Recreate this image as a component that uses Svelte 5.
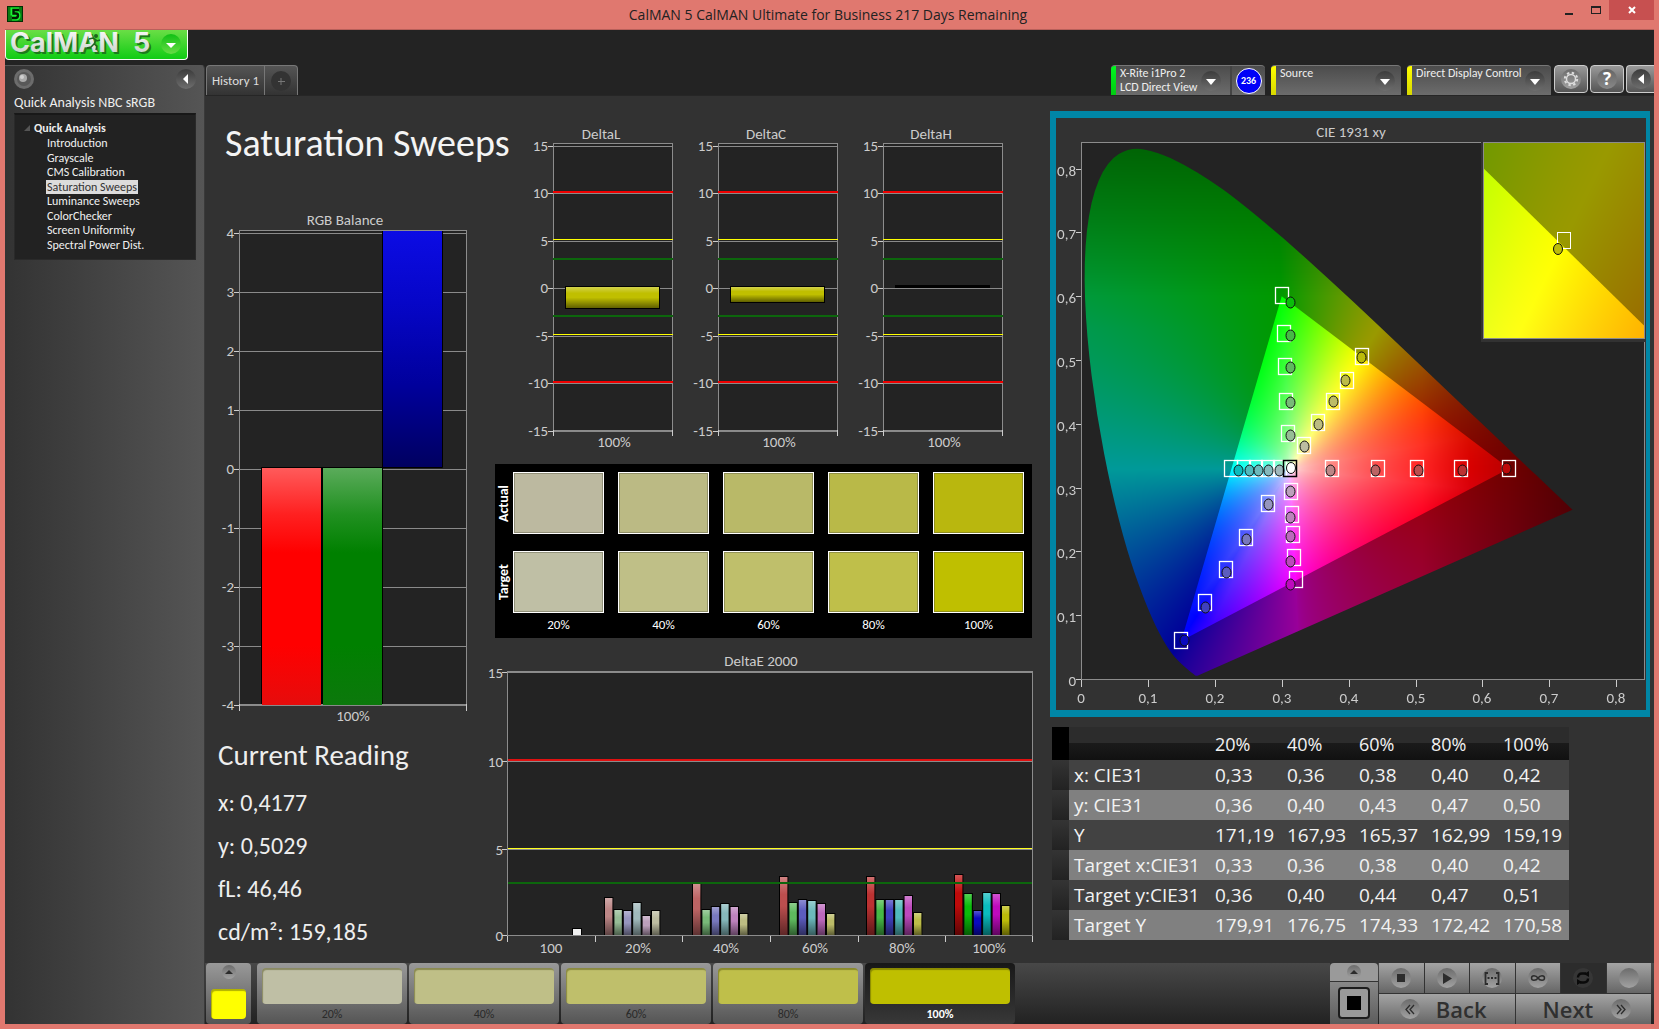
<script>
  import { onMount } from 'svelte';

  const workflow = [
    'Introduction',
    'Grayscale',
    'CMS Calibration',
    'Saturation Sweeps',
    'Luminance Sweeps',
    'ColorChecker',
    'Screen Uniformity',
    'Spectral Power Dist.'
  ];
  const selectedPage = 'Saturation Sweeps';

  const readings = ['x: 0,4177', 'y: 0,5029', 'fL: 46,46', 'cd/m²: 159,185'];

  const levels = ['20%', '40%', '60%', '80%', '100%'];
  const actual = ['#bcb9a0', '#bbba84', '#b9b968', '#b9b948', '#b9b70e'];
  const target = ['#bfbfa5', '#bfbf87', '#bfbf6b', '#bfbf4a', '#bfbf00'];

  const rows = [
    ['x: CIE31', '0,33', '0,36', '0,38', '0,40', '0,42'],
    ['y: CIE31', '0,36', '0,40', '0,43', '0,47', '0,50'],
    ['Y', '171,19', '167,93', '165,37', '162,99', '159,19'],
    ['Target x:CIE31', '0,33', '0,36', '0,38', '0,40', '0,42'],
    ['Target y:CIE31', '0,36', '0,40', '0,44', '0,47', '0,51'],
    ['Target Y', '179,91', '176,75', '174,33', '172,42', '170,58']
  ];

  const deltas = [
    { name: 'DeltaL', top: 166, height: 22, fill: '#c0bf00' },
    { name: 'DeltaC', top: 166, height: 16, fill: '#c0bf00' },
    { name: 'DeltaH', top: 165, height: 2, fill: '#000' }
  ];
  const deltaLimits = [
    [10, '#f00000'],
    [5, '#ffff00'],
    [3, '#0c660c'],
    [-3, '#0c660c'],
    [-5, '#ffff00'],
    [-10, '#f00000']
  ];

  const errorTicks = [23, 111, 198, 286, 374, 461, 548];
  const errorLabels = [
    [67, '100'],
    [154, '20%'],
    [242, '40%'],
    [331, '60%'],
    [418, '80%'],
    [505, '100%']
  ];
  const errorGroups = [
    { x: 120, tops: [249, 261, 262, 254, 267, 262], fills: ['#bc8686', '#96bc96', '#9696be', '#a0b9bc', '#bca0bc', '#bcbca0'] },
    { x: 208, tops: [234, 261, 258, 255, 258, 265], fills: ['#bc6464', '#78b978', '#7878be', '#86b9bc', '#bc82bc', '#bcbc82'] },
    { x: 295, tops: [228, 254, 251, 252, 255, 265], fills: ['#bc4e4e', '#5eb95e', '#5c5cbe', '#6cb9bc', '#bc68bc', '#bcbc68'] },
    { x: 382, tops: [228, 251, 251, 251, 247, 264], fills: ['#bc3232', '#46b946', '#4040be', '#50b9bc', '#bc48bc', '#bcbc48'] },
    { x: 470, tops: [226, 245, 262, 244, 245, 257], fills: ['#be0a0a', '#0abc0a', '#0a0abe', '#0abcbe', '#be0abe', '#bcbc0a'] }
  ];

  // CIE plot geometry
  const plotW = 563;
  const plotH = 537;
  const sx = 669;
  const sy = 638;
  const px = (x) => 25 + x * sx;
  const py = (y) => 561 - y * sy;

  const targets = [
    [0.3, 0.602], [0.303, 0.543], [0.305, 0.491], [0.307, 0.436], [0.31, 0.385],
    [0.4195, 0.507], [0.397, 0.469], [0.377, 0.436], [0.355, 0.403], [0.333, 0.366],
    [0.375, 0.33], [0.444, 0.33], [0.502, 0.33], [0.568, 0.33], [0.6395, 0.33],
    [0.314, 0.294], [0.315, 0.258], [0.317, 0.227], [0.319, 0.192], [0.321, 0.156],
    [0.28, 0.276], [0.247, 0.222], [0.2165, 0.172], [0.185, 0.12], [0.149, 0.0605],
    [0.224, 0.33], [0.243, 0.33], [0.262, 0.33], [0.279, 0.33], [0.297, 0.33]
  ];
  const measured = [
    [0.312, 0.591, '#0abe0a'], [0.312, 0.539, '#46b946'], [0.312, 0.489, '#5eb95e'], [0.312, 0.434, '#78b978'], [0.312, 0.383, '#96bc96'],
    [0.418, 0.505, '#bcbc0a'], [0.395, 0.469, '#bcbc48'], [0.376, 0.436, '#bcbc68'], [0.354, 0.4, '#bcbc82'], [0.333, 0.365, '#bcbca0'],
    [0.372, 0.328, '#bc8686'], [0.4395, 0.328, '#bc6464'], [0.503, 0.328, '#bc4e4e'], [0.569, 0.328, '#bc3232'], [0.635, 0.33, '#be0a0a'],
    [0.312, 0.294, '#bca0bc'], [0.312, 0.254, '#bc82bc'], [0.312, 0.224, '#bc68bc'], [0.312, 0.185, '#bc48bc'], [0.312, 0.149, '#be0abe'],
    [0.28, 0.274, '#9696be'], [0.247, 0.22, '#7878be'], [0.2165, 0.1675, '#5c5cbe'], [0.185, 0.113, '#4040be'], [0.1545, 0.061, '#0a0abe'],
    [0.235, 0.328, '#0abcbe'], [0.251, 0.328, '#50b9bc'], [0.265, 0.328, '#6cb9bc'], [0.28, 0.328, '#86b9bc'], [0.2955, 0.328, '#a0b9bc']
  ];

  const locus = [
    [0.1741, 0.005], [0.1714, 0.0051], [0.1689, 0.0069], [0.1644, 0.0109], [0.1566, 0.0177], [0.144, 0.0297],
    [0.1355, 0.0399], [0.1241, 0.0578], [0.1096, 0.0868], [0.0913, 0.1327], [0.0687, 0.2007], [0.0454, 0.295],
    [0.0235, 0.4127], [0.0082, 0.5384], [0.0039, 0.6548], [0.0139, 0.7502], [0.0389, 0.812], [0.0743, 0.8338],
    [0.1142, 0.8262], [0.1547, 0.8059], [0.1929, 0.7816], [0.2296, 0.7543], [0.3016, 0.6923], [0.3731, 0.6245],
    [0.4441, 0.5547], [0.5125, 0.4866], [0.5752, 0.4242], [0.627, 0.3725], [0.6658, 0.334], [0.6915, 0.3083],
    [0.719, 0.2809], [0.7347, 0.2653]
  ];
  const white = [0.3127, 0.329];
  const gamut = [[0.3, 0.6], [0.64, 0.33], [0.15, 0.06]];

  // Hue spokes around the white point: angle, colour, easing towards the next spoke
  const spokes = [
    [0, [1, 0, 0], 1.6],
    [59, [1, 1, 0], 1.2],
    [92.7, [0, 1, 0], 1.3],
    [180, [0, 1, 1], 1],
    [238.8, [0, 0, 1], 0.8],
    [272.7, [1, 0, 1], 0.6],
    [360, [1, 0, 0], 1]
  ];

  let mainCanvas;
  let insetCanvas;

  // Distance from white to the gamut edge along a direction
  function edgeDistance(dx, dy) {
    let best = 1;
    for (let i = 0; i < 3; i++) {
      const [ax, ay] = gamut[i];
      const [bx, by] = gamut[(i + 1) % 3];
      const ex = bx - ax;
      const ey = by - ay;
      const det = dx * ey - dy * ex;
      if (Math.abs(det) < 1e-9) continue;
      const t = ((ax - white[0]) * ey - (ay - white[1]) * ex) / det;
      if (t > 0 && t < best) best = t;
    }
    return Math.min(best, 0.27);
  }

  function chroma(x, y, level) {
    const dx = x - white[0];
    const dy = y - white[1];
    const d = Math.hypot(dx, dy) || 1e-6;
    const angle = ((Math.atan2(dy, dx) * 180) / Math.PI + 360) % 360;
    let i = 0;
    while (i < spokes.length - 2 && angle >= spokes[i + 1][0]) i++;
    const [a0, c0, ease] = spokes[i];
    const [a1, c1] = spokes[i + 1];
    const t = Math.pow((angle - a0) / (a1 - a0), ease);
    const s = Math.min(1, Math.sqrt(d / edgeDistance(dx / d, dy / d)));
    const fade = (1 - 2.1 * Math.max(0, x - 0.51)) * (1 - 1.5 * Math.max(0, y - 0.6));
    const blueFade = 1 - 2.5 * Math.max(0, y - 0.55);
    return c0.map((c, k) => {
      const hue = (c + (c1[k] - c) * t) * (k === 2 ? blueFade : 1);
      return 255 * level * fade * (1 - s * (1 - hue));
    });
  }

  function layer(w, h, toXY, level) {
    const c = document.createElement('canvas');
    c.width = w;
    c.height = h;
    const ctx = c.getContext('2d');
    const img = ctx.createImageData(w, h);
    for (let j = 0; j < h; j++) {
      for (let i = 0; i < w; i++) {
        const [x, y] = toXY(i + 0.5, j + 0.5);
        const [r, g, b] = chroma(x, y, level);
        const k = (j * w + i) * 4;
        img.data[k] = r;
        img.data[k + 1] = g;
        img.data[k + 2] = b;
        img.data[k + 3] = 255;
      }
    }
    ctx.putImageData(img, 0, 0);
    return c;
  }

  function mask(canvas, points, smooth) {
    const ctx = canvas.getContext('2d');
    ctx.globalCompositeOperation = 'destination-in';
    ctx.beginPath();
    ctx.moveTo(...points[0]);
    for (let i = 1; i < points.length; i++) {
      const [x, y] = points[i];
      if (smooth && i < points.length - 1) {
        const [nx, ny] = points[i + 1];
        ctx.quadraticCurveTo(x, y, (x + nx) / 2, (y + ny) / 2);
      } else {
        ctx.lineTo(x, y);
      }
    }
    ctx.closePath();
    ctx.fill();
    return canvas;
  }

  function paint(canvas, x0, y1, kx, ky, outline) {
    const { width: w, height: h } = canvas;
    const toXY = (i, j) => [x0 + i / kx, y1 - j / ky];
    const toPx = ([x, y]) => [(x - x0) * kx, (y1 - y) * ky];
    const ctx = canvas.getContext('2d');
    const dark = layer(w, h, toXY, 0.6);
    ctx.drawImage(outline ? mask(dark, outline.map(toPx), true) : dark, 0, 0);
    ctx.drawImage(mask(layer(w, h, toXY, 1), gamut.map(toPx), false), 0, 0);
  }

  onMount(() => {
    paint(mainCanvas, 0, plotH / sy, sx, sy, locus);
    paint(insetCanvas, 0.3888, 0.5375, 2600, 3210, null);
  });
</script>

{#snippet downArrow()}
  <svg class="round" viewBox="0 0 20 20" aria-hidden="true">
    <circle cx="10" cy="10" r="10" fill="url(#knob)" />
    <path d="M5 8h10l-5 6z" fill="#fff" />
  </svg>
{/snippet}

<svg class="defs" aria-hidden="true">
  <defs>
    <linearGradient id="knob" x1="0" y1="0" x2="0" y2="1">
      <stop offset="0" stop-color="#3c3c3c" /><stop offset="1" stop-color="#6e6e6e" />
    </linearGradient>
    <linearGradient id="knobLight" x1="0" y1="0" x2="0" y2="1">
      <stop offset="0" stop-color="#6c6c6c" /><stop offset="1" stop-color="#a2a2a2" />
    </linearGradient>
    <linearGradient id="gloss" x1="0" y1="0" x2="0" y2="1">
      <stop offset="0" stop-color="#fff" stop-opacity=".3" />
      <stop offset=".3" stop-color="#fff" stop-opacity="0" />
      <stop offset=".5" stop-color="#000" stop-opacity="0" />
      <stop offset="1" stop-color="#000" stop-opacity=".5" />
    </linearGradient>
    <linearGradient id="redBar" x1="0" y1="0" x2="0" y2="1">
      <stop offset="0" stop-color="#ff5c5c" /><stop offset=".2" stop-color="#ff2020" /><stop offset=".36" stop-color="#f00" />
      <stop offset=".75" stop-color="#f00" /><stop offset="1" stop-color="#e60c0c" />
    </linearGradient>
    <linearGradient id="greenBar" x1="0" y1="0" x2="0" y2="1">
      <stop offset="0" stop-color="#5cac5c" /><stop offset=".2" stop-color="#209020" /><stop offset=".36" stop-color="#008000" />
      <stop offset=".75" stop-color="#008000" /><stop offset="1" stop-color="#0c780c" />
    </linearGradient>
    <linearGradient id="blueBar" x1="0" y1="0" x2="0" y2="1">
      <stop offset="0" stop-color="#0c0ce4" /><stop offset=".3" stop-color="#0606c8" /><stop offset=".65" stop-color="#00009c" />
      <stop offset="1" stop-color="#000060" />
    </linearGradient>
  </defs>
</svg>

<div class="window">
  <header class="titlebar">
    <svg class="appicon" viewBox="0 0 16 16" aria-hidden="true">
      <rect width="16" height="16" fill="#032d03" />
      <rect x="1" y="1" width="14" height="14" fill="#0a7a12" />
      <path d="M12 4H6v3h3q2 0 2 2.500T9 12H5" fill="none" stroke="#19f531" stroke-width="5" />
      <path d="M12 4H6.500v3.500H9q2 0 2 2T9 12H5" fill="none" stroke="#021c02" stroke-width="2.400" />
    </svg>
    <h1>CalMAN 5 CalMAN Ultimate for Business 217 Days Remaining</h1>
    <div class="winbtns">
      <button aria-label="Minimize"><svg viewBox="0 0 10 10"><path d="M1 8h8v2H1z" fill="#222" /></svg></button>
      <button aria-label="Maximize"><svg viewBox="0 0 10 10"><path d="M0 1h10v8H0zM1 3v5h8V3z" fill="#222" fill-rule="evenodd" /></svg></button>
      <button class="close" aria-label="Close"><svg viewBox="0 0 10 10"><path d="M2 2l6 6M8 2l-6 6" stroke="#fff" stroke-width="2" /></svg></button>
    </div>
  </header>

  <div class="app">
    <div class="brandrow">
      <button class="logo" aria-label="CalMAN 5 menu">
        <svg viewBox="0 0 181 29">
          <defs>
            <linearGradient id="metal" x1="0" y1="0" x2="0" y2="1">
              <stop offset="0" stop-color="#fff" /><stop offset="1" stop-color="#c4ccc4" />
            </linearGradient>
            <linearGradient id="leaf" x1="0" y1="0" x2="0" y2="1">
              <stop offset="0" stop-color="#10c014" /><stop offset="1" stop-color="#66dc44" />
            </linearGradient>
          </defs>
          <g class="logotext">
            <text x="6" y="24" fill="#1c7a1c">CalMAN</text>
            <text x="129" y="24" fill="#1c7a1c">5</text>
            <text x="4" y="22" fill="url(#metal)">CalMAN</text>
            <text x="127" y="22" fill="url(#metal)">5</text>
          </g>
          <circle cx="90" cy="6" r="2" fill="#1d641d" />
          <path d="M83 9l4-1 3 2-2 4 3 2-1 4M88 14l-3 3-4 1M89 9l2 2 3-1" fill="none" stroke="#1d641d" stroke-width="1.500" />
          <circle cx="165" cy="14" r="10" fill="url(#leaf)" />
          <path d="M160 13h10l-5 5z" fill="#fff" />
        </svg>
      </button>
    </div>

    <div class="body">
      <aside class="sidebar">
        <div class="sidetop">
          <button aria-label="Workflow options">
            <svg class="round" viewBox="0 0 20 20"><circle cx="10" cy="10" r="10" fill="#6c6c6c" /><circle cx="10" cy="10" r="7" fill="#585858" /><circle cx="9" cy="9" r="4" fill="#aaa" /><circle cx="8" cy="8" r="2" fill="#d0d0d0" /></svg>
          </button>
          <button aria-label="Collapse workflow">
            <svg class="round" viewBox="0 0 20 20"><circle cx="10" cy="10" r="10" fill="url(#knob)" /><path d="M12 5v10l-5-5z" fill="#fff" /></svg>
          </button>
        </div>
        <h2>Quick Analysis NBC sRGB</h2>
        <nav class="tree">
          <div class="root"><svg viewBox="0 0 6 6" aria-hidden="true"><path d="M6 0v6H0z" fill="#555" /></svg>Quick Analysis</div>
          <ul>
            {#each workflow as item}
              <li><a href="#top" class:selected={item === selectedPage}>{item}</a></li>
            {/each}
          </ul>
        </nav>
      </aside>

      <div class="stage">
        <div class="toolbar">
          <div class="tabs">
            <button class="tab">History 1</button>
            <button class="tab add" aria-label="Add history"><svg class="round" viewBox="0 0 20 20"><circle cx="10" cy="10" r="10" fill="#333" /><path d="M10 7v7M7 10.500h7" stroke="#777" /></svg></button>
          </div>
          <div class="devices">
            <button class="device meter">
              <span class="strip green"></span>
              <span class="devname">X-Rite i1Pro 2<br />LCD Direct View</span>
              {@render downArrow()}
              <span class="cell"><span class="badge">236</span></span>
            </button>
            <button class="device source"><span class="strip"></span><span class="devname">Source</span>{@render downArrow()}</button>
            <button class="device display"><span class="strip"></span><span class="devname">Direct Display Control</span>{@render downArrow()}</button>
            <button class="tool" aria-label="Settings">
              <svg viewBox="0 0 20 20"><circle cx="10" cy="10" r="10" fill="url(#knobLight)" /><circle cx="10" cy="10" r="4.500" fill="none" stroke="#ddd" stroke-width="1.500" /><circle cx="10" cy="10" r="6.200" fill="none" stroke="#ddd" stroke-width="2" stroke-dasharray="2.400 2.470" /></svg>
            </button>
            <button class="tool help" aria-label="Help"><span>?</span></button>
            <button class="tool last" aria-label="Collapse toolbar">
              <svg viewBox="0 0 20 20"><circle cx="10" cy="10" r="10" fill="url(#knob)" /><path d="M13 5v10l-6-5z" fill="#fff" /></svg>
            </button>
          </div>
        </div>

        <main class="content" id="top">
          <section class="left">
            <h2 class="pagetitle">Saturation Sweeps</h2>
            <svg class="chart" viewBox="0 0 279 530" role="img" aria-label="RGB Balance">
              <rect x="34.500" y="24.500" width="227" height="474" fill="#232323" />
              <text x="140" y="19" class="mid">RGB Balance</text>
              {#each [4, 3, 2, 1, 0, -1, -2, -3, -4] as v}
                <path d="M29 {Math.round(263 - 59 * v)}.5H34" stroke="#ccc" />
                <path d="M34 {Math.round(263 - 59 * v)}.5H261" stroke="#8a8a8a" />
                <text x="29" y={Math.round(268 - 59 * v)} class="end">{v}</text>
              {/each}
              <rect x="34.500" y="24.500" width="227" height="474" fill="none" stroke="#8c8c8c" />
              <path d="M34.500 498v7M261.500 498v7" stroke="#ccc" />
              <rect x="57" y="261" width="59" height="238" fill="url(#redBar)" />
              <rect x="118" y="261" width="59" height="238" fill="url(#greenBar)" />
              <rect x="178" y="25" width="59" height="236" fill="url(#blueBar)" />
              <path d="M56.500 498V261.500H178M116.500 261v237M117.500 261v237M177.500 498V25M178 261.500h59.500V25" fill="none" stroke="#000" />
              <text x="148" y="515" class="mid">100%</text>
            </svg>
            <h3>Current Reading</h3>
            {#each readings as line}<p class="reading">{line}</p>{/each}
          </section>

          <section class="middle">
            <div class="deltas">
              {#each deltas as d}
                <svg class="chart" viewBox="0 0 165 335" role="img" aria-label={d.name}>
                  <rect x="29.500" y="23.500" width="119" height="287" fill="#232323" />
                  <text x="77" y="19" class="mid">{d.name}</text>
                  {#each [15, 10, 5, 0, -5, -10, -15] as v}
                    <path d="M24 {Math.round(168 - 9.5 * v)}.5H29" stroke="#ccc" />
                    <path d="M29 {Math.round(168 - 9.5 * v)}.5H148" stroke="#8a8a8a" />
                    <text x="24" y={Math.round(173 - 9.5 * v)} class="end">{v}</text>
                  {/each}
                  <rect x="29.500" y="23.500" width="119" height="287" fill="none" stroke="#8c8c8c" />
                  <path d="M29.500 310v6M148.500 310v6" stroke="#ccc" />
                  <rect x="41.500" y={d.top + 0.5} width="94" height={d.height} fill={d.fill} stroke="#000" />
                  {#if d.height > 2}
                    <rect x="42" y={d.top + 1} width="93" height={d.height - 1} fill="url(#gloss)" />
                  {/if}
                  {#each deltaLimits as [v, color]}
                    <rect x="29" y={Math.round(166 - 9.5 * v)} width="120" height={Math.abs(v) === 5 ? 1 : 2} fill={color} />
                  {/each}
                  <text x="90" y="327" class="mid">100%</text>
                </svg>
              {/each}
            </div>

            <div class="swatches">
              <span class="vert">Actual</span>
              <div class="five">{#each actual as c}<span class="swatch" style="background:{c}"></span>{/each}</div>
              <span class="vert">Target</span>
              <div class="five">{#each target as c}<span class="swatch" style="background:{c}"></span>{/each}</div>
              <span></span>
              <div class="five">{#each levels as l}<span class="level">{l}</span>{/each}</div>
            </div>

            <svg class="chart errors" viewBox="0 0 566 314" role="img" aria-label="DeltaE 2000">
              <rect x="23.500" y="23.500" width="525" height="264" fill="#232323" />
              <text x="277" y="18" class="mid">DeltaE 2000</text>
              {#each [[24, 15], [113, 10], [201, 5], [287, 0]] as [y, v]}
                <path d="M18 {y}.5H23" stroke="#ccc" />
                <path d="M23 {y}.5H548" stroke="#8a8a8a" />
                <text x="19" y={y + 6} class="end">{v}</text>
              {/each}
              <rect x="88" y="280" width="10" height="7" fill="#000" />
              <rect x="89" y="281" width="8" height="6" fill="#f0f0f0" />
              {#each errorGroups as g}
                {#each g.tops as top, i}
                  <rect x={g.x + i * 9.4} y={top} width="9.4" height={287 - top} fill="#000" />
                  <rect x={g.x + 1 + i * 9.4} y={top + 1} width="7.4" height={286 - top} fill={g.fills[i]} />
                  <rect x={g.x + 1 + i * 9.4} y={top + 1} width="7.4" height={286 - top} fill="url(#gloss)" />
                {/each}
              {/each}
              <rect x="23" y="111" width="526" height="2" fill="#e01010" />
              <rect x="23" y="200" width="526" height="1" fill="#ffff20" />
              <rect x="23" y="234" width="526" height="2" fill="#0c660c" />
              <rect x="23.500" y="23.500" width="525" height="264" fill="none" stroke="#8c8c8c" />
              {#each errorTicks as x}<path d="M{x}.5 288v6" stroke="#ccc" />{/each}
              {#each errorLabels as [x, label]}<text {x} y="305" class="mid">{label}</text>{/each}
            </svg>
          </section>

          <section class="right">
            <div class="cie">
              <svg class="chart" viewBox="0 0 590 592" role="img" aria-label="CIE 1931 xy">
                <text x="295" y="19" class="mid">CIE 1931 xy</text>
                <rect x="25.500" y="24.500" width={plotW} height={plotH} fill="#232323" />
                <foreignObject x="25" y="24" width={plotW} height={plotH}>
                  <canvas bind:this={mainCanvas} width={plotW} height={plotH}></canvas>
                </foreignObject>
                <rect x="25.500" y="24.500" width={plotW} height={plotH} fill="none" stroke="#8c8c8c" />
                {#each [0, 1, 2, 3, 4, 5, 6, 7, 8] as n}
                  {@const label = n === 0 ? '0' : `0,${n}`}
                  <path d="M20 {Math.round(py(n / 10))}.5H25M{Math.round(px(n / 10))}.5 562v7" stroke="#ccc" />
                  <text x="20" y={Math.round(py(n / 10)) + 7} class="end">{label}</text>
                  <text x={Math.round(px(n / 10))} y="585" class="mid">{label}</text>
                {/each}
                {#each targets as [x, y]}
                  <rect x={Math.round(px(x)) - 6.5} y={Math.round(py(y)) - 7.5} width="13" height="16" fill="none" stroke="#fff" stroke-width="1.300" />
                {/each}
                {#each measured as [x, y, color]}
                  <ellipse cx={Math.round(px(x)) + 0.5} cy={Math.round(py(y)) + 0.5} rx="4.500" ry="5.500" fill={color} stroke="#101010" />
                {/each}
                <rect x={Math.round(px(0.312)) - 6.5} y={Math.round(py(0.33)) - 7.5} width="13" height="16" fill="none" stroke="#000" stroke-width="1.500" />
                <ellipse cx={Math.round(px(0.3135))} cy={Math.round(py(0.33))} rx="4.500" ry="5.500" fill="#fff" stroke="#101010" />
                <rect x="425" y="22" width="165" height="202" fill="#323232" />
                <foreignObject x="428" y="25" width="160" height="195">
                  <canvas bind:this={insetCanvas} width="160" height="196"></canvas>
                </foreignObject>
                <rect x="427.500" y="24.500" width="161" height="196" fill="none" stroke="#8c8c8c" />
                <rect x="501.500" y="114.500" width="13" height="16" fill="none" stroke="#fff" />
                <ellipse cx="502" cy="131" rx="4.500" ry="5.500" fill="#bcbc0a" stroke="#101010" />
              </svg>
            </div>

            <table>
              <thead>
                <tr><th class="pick"></th><th></th>{#each levels as l}<th scope="col">{l}</th>{/each}</tr>
              </thead>
              <tbody>
                {#each rows as row}
                  <tr><td class="pick"></td><th scope="row">{row[0]}</th>{#each row.slice(1) as cell}<td>{cell}</td>{/each}</tr>
                {/each}
              </tbody>
            </table>
          </section>
        </main>

        <footer class="bottombar">
          <button class="current" aria-label="Current colour">
            <svg viewBox="0 0 14 14"><circle cx="7" cy="7" r="7" fill="url(#knobLight)" /><path d="M3 9l4-4 4 4z" fill="#2c2c2c" /></svg>
            <span class="chip yellow"></span>
          </button>
          <div class="patches">
            {#each levels as l, i}
              <button class="patch" class:active={l === '100%'}>
                <span class="chip" style="background:{target[i]}"></span>
                <span class="patchlabel">{l}</span>
              </button>
            {/each}
          </div>
          <div class="transport">
            <div class="pattern">
              <button class="up" aria-label="Pattern options"><svg viewBox="0 0 14 14"><circle cx="7" cy="7" r="7" fill="url(#knobLight)" /><path d="M3 9l4-4 4 4z" fill="#2c2c2c" /></svg></button>
              <button class="window-pattern" aria-label="Window pattern"><span></span></button>
            </div>
            <div class="keys">
              <button aria-label="Stop"><svg viewBox="0 0 20 20"><circle cx="10" cy="10" r="10" fill="url(#knobLight)" /><path d="M6 6h8v8H6z" fill="#2c2c2c" /></svg></button>
              <button aria-label="Read"><svg viewBox="0 0 20 20"><circle cx="10" cy="10" r="10" fill="url(#knobLight)" /><path d="M6 5v11l9-5.500z" fill="#2c2c2c" /></svg></button>
              <button aria-label="Read series"><svg viewBox="0 0 20 20"><circle cx="10" cy="10" r="10" fill="url(#knobLight)" /><path d="M6 5H3.500v11H6M14 5h2.500v11H14M5.500 10h2M9 10h2M12.500 10h2" fill="none" stroke="#2c2c2c" stroke-width="1.800" /></svg></button>
              <button aria-label="Read continuous"><svg viewBox="0 0 20 20"><circle cx="10" cy="10" r="10" fill="url(#knobLight)" /><path d="M10 10C8 7 3.500 7 3.500 10S8 13 10 10s6.500-3 6.500 0-4.500 3-6.500 0z" fill="none" stroke="#2c2c2c" stroke-width="1.500" /></svg></button>
              <button class="dark" aria-label="Auto advance"><svg viewBox="0 0 20 20"><circle cx="10" cy="10" r="10" fill="#363636" /><path d="M5 9.500q0-4 4-4h4M15 10.500q0 4-4 4H7" fill="none" stroke="#0a0a0a" stroke-width="2.400" /><path d="M11 6l5-3v6zM9 14l-5 3v-6z" fill="#0a0a0a" /></svg></button>
              <button aria-label="Status"><svg viewBox="0 0 20 20"><circle cx="10" cy="10" r="10" fill="url(#knobLight)" /></svg></button>
              <button class="wide"><svg viewBox="0 0 20 20"><circle cx="10" cy="10" r="10" fill="url(#knobLight)" /><path d="M10 6l-4 4.500 4 4.500M14 6l-4 4.500 4 4.500" fill="none" stroke="#2c2c2c" stroke-width="1.300" /></svg>Back</button>
              <button class="wide next">Next<svg viewBox="0 0 20 20"><circle cx="10" cy="10" r="10" fill="url(#knobLight)" /><path d="M6 6l4 4.500L6 15M10 6l4 4.500-4 4.500" fill="none" stroke="#2c2c2c" stroke-width="1.300" /></svg></button>
            </div>
          </div>
        </footer>
      </div>
    </div>
  </div>
</div>

<style>
  :global(body) { background: #e0786f; }
  * { box-sizing: border-box; }
  h1, h2, h3, p, ul { margin: 0; padding: 0; font-weight: 400; }
  button { border: 0; padding: 0; margin: 0; background: none; color: inherit; font: inherit; text-align: left; }
  .defs { position: absolute; width: 0; height: 0; }
  .window { min-height: 100vh; display: flex; flex-direction: column; padding: 0 5px 5px; background: #e0786f; font-family: Carlito, Lato, sans-serif; color: #eee; }

  .titlebar { height: 30px; display: flex; justify-content: space-between; border-bottom: 1px solid #b8605a; }
  .appicon { width: 16px; height: 16px; margin: 6px 0 0 2px; }
  .titlebar h1 { flex: 1; text-align: center; font: 14px/30px "Open Sans", sans-serif; color: #222; padding-left: 78px; }
  .winbtns { display: flex; }
  .winbtns button { width: 27px; height: 20px; display: grid; place-items: center; }
  .winbtns svg { width: 10px; height: 10px; }
  .winbtns .close { width: 45px; background: #c75050; }

  .app { flex: 1; display: flex; flex-direction: column; background: #232323; }
  .brandrow { height: 35px; }
  .logo { display: block; width: 183px; height: 30px; border-radius: 0 0 4px 4px; border: solid #f4fff4; border-width: 0 1px 1px; background: linear-gradient(#6ade46, #10cc14); }
  .logo svg { display: block; width: 100%; height: 100%; overflow: visible; }
  .logotext { font: 700 27px Inter, sans-serif; }
  .body { flex: 1; display: flex; }
  .round { width: 20px; height: 20px; flex: none; display: block; }

  .sidebar { width: 200px; flex: none; background: linear-gradient(90deg, #333, #555); border-top: 1px solid #555; border-right: 1px solid #3a3a3a; border-top-right-radius: 4px; padding: 3px 8px 0 9px; }
  .sidetop { display: flex; justify-content: space-between; }
  .sidebar h2 { font-size: 14px; line-height: 20px; margin: 4px 0 0; white-space: nowrap; }
  .tree { background: #222; border: 1px solid #2a2a2a; border-top: 2px solid #181818; height: 147px; padding: 5px 0 0 9px; font-size: 12px; line-height: 16px; }
  .tree ul { list-style: none; padding-left: 22px; line-height: 15px; }
  .tree li { height: 15px; white-space: nowrap; }
  .tree li:nth-child(even) { height: 14px; line-height: 14px; }
  .root { font-weight: 700; display: flex; align-items: center; gap: 4px; }
  .root svg { width: 6px; height: 6px; }
  .tree a { color: #f0f0f0; text-decoration: none; display: inline-block; padding: 0 1px; }
  .tree a.selected { background: #dcdcdc; color: #333; }

  .stage { flex: 1; min-width: 0; display: flex; flex-direction: column; background: #323232; }
  .toolbar { height: 31px; background: #232323; display: flex; justify-content: space-between; padding-left: 1px; border-bottom: 1px solid #262626; }
  .tabs { display: flex; height: 30px; border: 1px solid #777; border-bottom: 0; border-radius: 4px 4px 0 0; background: linear-gradient(#555, #333); }
  .tab { width: 57px; font-size: 13px; text-align: center; white-space: nowrap; color: #ddd; }
  .tab.add { width: 33px; border-left: 1px solid #777; display: grid; place-items: center; }
  .devices { display: flex; height: 30px; font-size: 12px; line-height: 14px; }
  .device { display: flex; height: 30px; align-items: center; background: linear-gradient(#4c4c4c, #6c6c6c); border-radius: 4px 4px 0 0; overflow: hidden; border-top: 1px solid #777; margin-right: 6px; white-space: nowrap; }
  .strip { width: 5px; align-self: stretch; background: linear-gradient(#ffff00, #d8d800); margin-right: 4px; }
  .strip.green { background: linear-gradient(#00f820, #00cc10); }
  .devname { flex: 1; align-self: flex-start; }
  .meter { width: 154px; }
  .cell { width: 35px; margin-left: 9px; align-self: stretch; border-left: 2px solid #444; display: grid; place-items: center; }
  .badge { width: 26px; height: 26px; border-radius: 50%; background: #0000f8; border: 1px solid #fff; color: #fff; font-weight: 700; font-size: 10px; line-height: 24px; text-align: center; }
  .source { width: 130px; padding-right: 6px; }
  .display { width: 144px; padding-right: 6px; margin-right: 3px; }
  .tool { width: 34px; height: 28px; margin-right: 2px; border: 1px solid #ccc; border-radius: 4px; background: linear-gradient(#999, #555); display: grid; place-items: center; }
  .tool svg { width: 20px; height: 20px; display: block; }
  .tool span { width: 20px; height: 20px; border-radius: 50%; background: linear-gradient(#666, #888); font: 700 17px/20px "Open Sans", sans-serif; text-align: center; color: #fff; }
  .tool.last { width: 28px; margin-right: 0; border-right: 0; border-radius: 4px 0 0 4px; }

  .content { flex: 1; display: grid; grid-template-columns: 279fr 566fr 604fr; align-items: start; }
  .chart { display: block; width: 100%; height: auto; font-size: 15px; fill: #ccc; }
  .mid { text-anchor: middle; }
  .end { text-anchor: end; }
  .left { padding-top: 23px; min-width: 0; }
  .pagetitle { font-size: 38px; line-height: 48px; padding-left: 20px; margin-bottom: 39px; white-space: nowrap; color: #f4f4f4; }
  .left h3 { font-size: 29px; line-height: 38px; padding-left: 13px; margin-bottom: 7px; }
  .reading { font-size: 24px; line-height: 43px; padding-left: 13px; white-space: nowrap; }

  .middle { padding-top: 24px; min-width: 0; }
  .deltas { display: grid; grid-template-columns: repeat(3, 1fr); padding: 0 31px 0 40px; }
  .swatches { margin: 9px 18px 10px 11px; padding: 8px 8px 0 0; height: 174px; background: #000; display: grid; grid-template-columns: 18px 1fr; grid-template-rows: 62px 62px 14px; row-gap: 17px; font-size: 13px; color: #fff; }
  .five { display: grid; grid-template-columns: repeat(5, 1fr); gap: 14px; }
  .vert { writing-mode: vertical-rl; transform: rotate(180deg); text-align: center; line-height: 18px; font-weight: 700; font-size: 14px; }
  .swatch { border: 1px solid #fff; box-shadow: inset 0 0 0 1px rgba(80, 80, 60, .4); }
  .level { text-align: center; line-height: 14px; margin-top: -12px; }

  .right { padding: 15px 4px 0 0; min-width: 0; }
  .cie { border: solid #0086a6; border-width: 7px 4px 7px 6px; }
  canvas { display: block; }
  table { border-collapse: collapse; margin: 10px 0 0 2px; font: 19px "Open Sans", sans-serif; color: #f2f2f2; table-layout: fixed; width: 517px; }
  th, td { font-weight: 400; text-align: left; padding: 0; height: 30px; width: 72px; white-space: nowrap; line-height: 24px; }
  th:nth-child(2) { padding-left: 5px; width: 146px; }
  .pick { width: 17px; background: linear-gradient(#343434, #222); }
  thead th { height: 33px; background: linear-gradient(#2c2c2c 49%, #1a1a1a 50%, #111); font-size: 18px; }
  thead .pick { background: #000; }
  thead th:last-child { width: 66px; }
  tbody tr { background: #424242; }
  tbody tr:nth-child(even) { background: #808080; }

  .bottombar { height: 61px; display: flex; background: linear-gradient(#484848, #222); padding: 0 3px 0 1px; font-size: 12px; }
  .current { width: 45px; height: 61px; border-radius: 4px; background: linear-gradient(#999, #555); display: flex; flex-direction: column; align-items: center; padding-top: 2px; }
  .current svg { width: 14px; height: 14px; margin-bottom: 10px; }
  .chip { display: block; border-radius: 4px; box-shadow: inset 1px 2px 1px rgba(60, 60, 0, .4); }
  .yellow { width: 35px; height: 30px; background: #ff0; }
  .patches { flex: 1; display: flex; gap: 2px; margin-left: 6px; }
  .patch { width: 150px; border-radius: 4px; background: linear-gradient(#999, #555); padding: 5px; color: #2a2a2a; }
  .patch .chip { height: 36px; }
  .patchlabel { display: block; text-align: center; line-height: 20px; }
  .patch.active { background: linear-gradient(#181818, #383838); color: #fff; font-weight: 700; }
  .transport { display: flex; gap: 1px; }
  .pattern { width: 48px; display: grid; grid-template-rows: 18px 42px; gap: 1px; background: #333; }
  .pattern button { display: grid; place-items: center; }
  .pattern svg { width: 14px; height: 14px; }
  .up { background: #9a9a9a; border-radius: 4px 4px 0 0; }
  .window-pattern { background: linear-gradient(#888, #5c5c5c); }
  .window-pattern span { width: 32px; height: 32px; border: 2px solid #1c1c1c; border-radius: 4px; background: linear-gradient(#000, #000) center / 14px 14px no-repeat, #999; }
  .keys { width: 272px; display: grid; grid-template-columns: repeat(6, 1fr); grid-template-rows: 30px 30px; gap: 1px; background: #333; }
  .keys button { background: linear-gradient(#a4a4a4, #666); display: flex; align-items: center; justify-content: center; }
  .keys svg { width: 20px; height: 20px; }
  .keys .dark { background: #2c2c2c; }
  .keys .wide { grid-column: span 3; font: 600 22px/30px "Open Sans", sans-serif; color: #303030; justify-content: space-between; padding: 0 28px 0 21px; }
  .keys .next { padding: 0 20px 0 27px; }
</style>
